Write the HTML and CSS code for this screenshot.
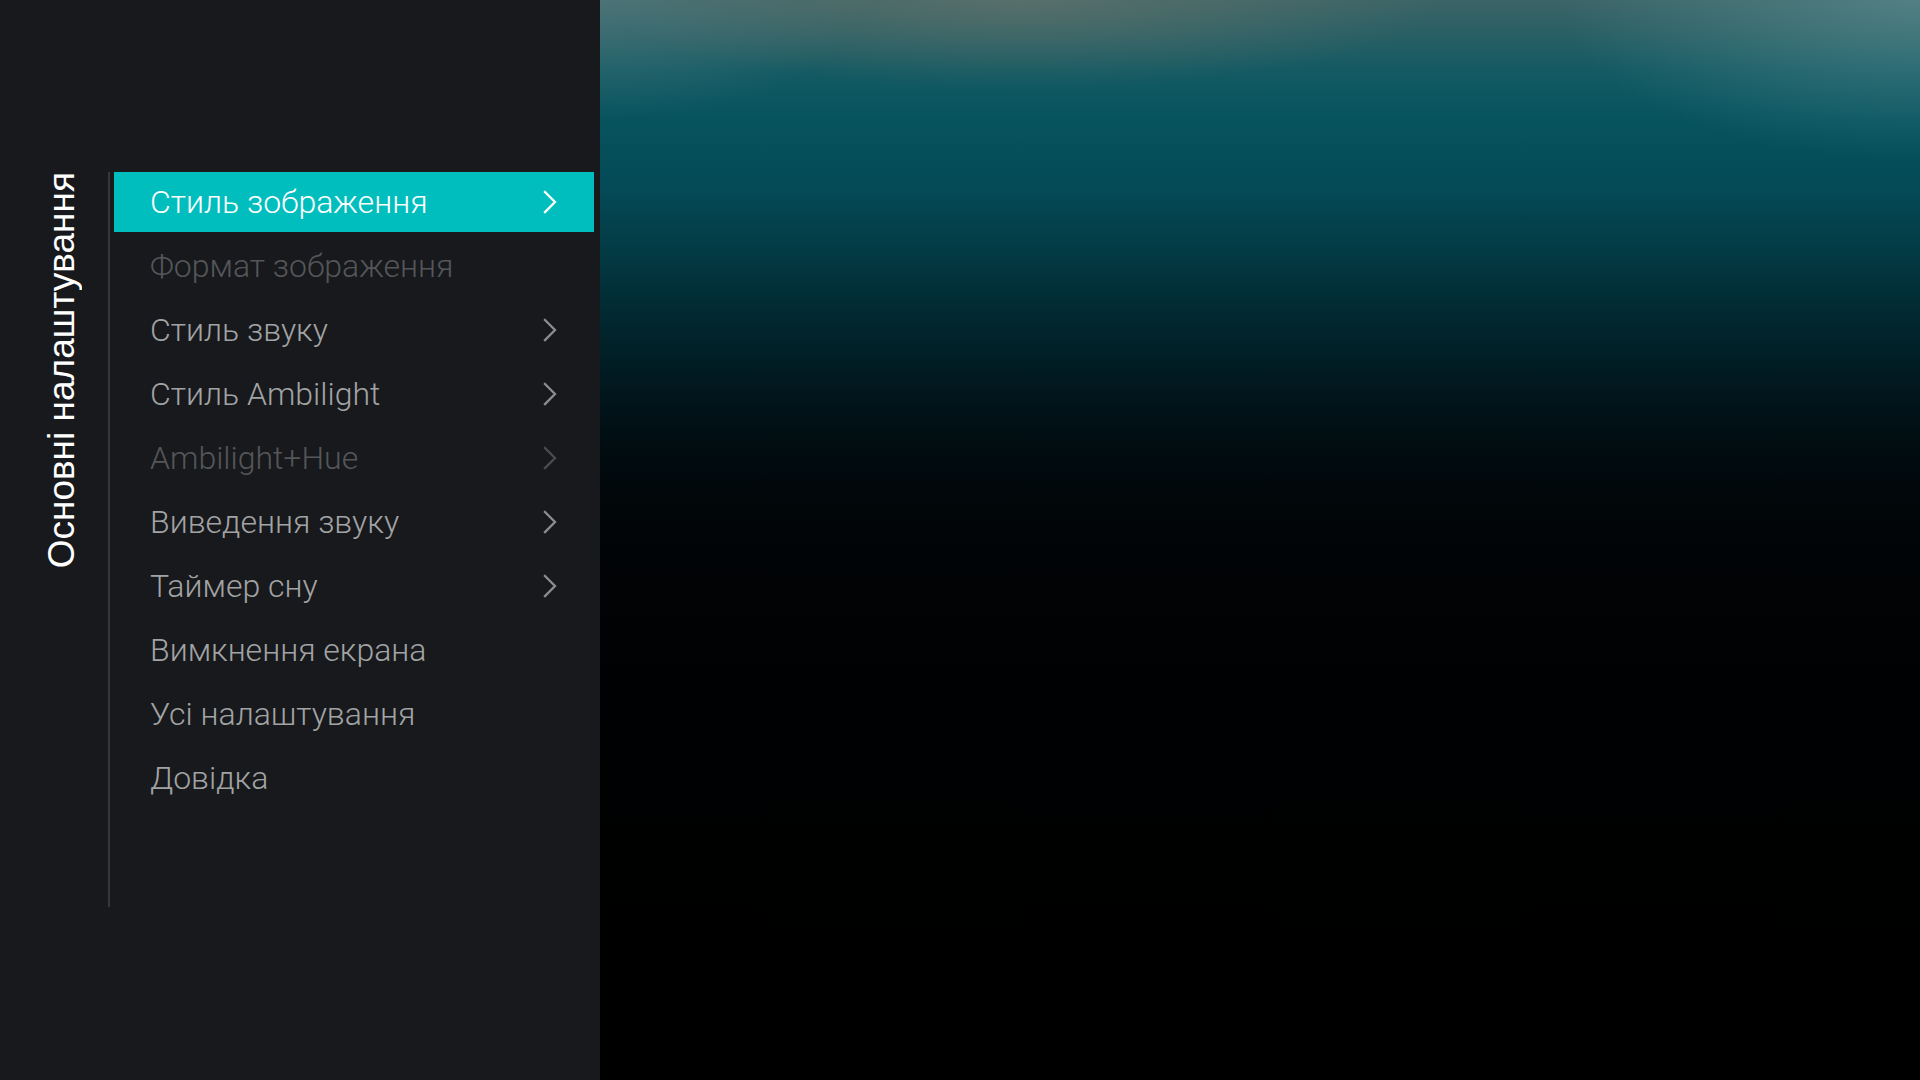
FILE: index.html
```html
<!DOCTYPE html>
<html lang="uk">
<head>
<meta charset="utf-8">
<title>Основні налаштування</title>
<link rel="stylesheet" href="styles.css">
</head>
<body>
<div class="screen">
  <aside class="panel">
    <div class="title-col">
      <h1 class="title">Основні налаштування</h1>
    </div>
    <ul class="menu">
      <li class="item selected"><span class="label">Стиль зображення</span><svg class="chev" viewBox="0 0 14 24"><path d="M2 2 L12 12 L2 22"/></svg></li>
      <li class="item disabled"><span class="label">Формат зображення</span></li>
      <li class="item"><span class="label">Стиль звуку</span><svg class="chev" viewBox="0 0 14 24"><path d="M2 2 L12 12 L2 22"/></svg></li>
      <li class="item"><span class="label">Стиль Ambilight</span><svg class="chev" viewBox="0 0 14 24"><path d="M2 2 L12 12 L2 22"/></svg></li>
      <li class="item disabled"><span class="label">Ambilight+Hue</span><svg class="chev" viewBox="0 0 14 24"><path d="M2 2 L12 12 L2 22"/></svg></li>
      <li class="item"><span class="label">Виведення звуку</span><svg class="chev" viewBox="0 0 14 24"><path d="M2 2 L12 12 L2 22"/></svg></li>
      <li class="item"><span class="label">Таймер сну</span><svg class="chev" viewBox="0 0 14 24"><path d="M2 2 L12 12 L2 22"/></svg></li>
      <li class="item"><span class="label">Вимкнення екрана</span></li>
      <li class="item"><span class="label">Усі налаштування</span></li>
      <li class="item"><span class="label">Довідка</span></li>
    </ul>
  </aside>
  <main class="view"></main>
</div>
</body>
</html>
```

FILE: styles.css
```css
html, body {
  margin: 0;
  padding: 0;
  background: #000;
}
.screen {
  display: flex;
  width: 1920px;
  height: 1080px;
  overflow: hidden;
}
.panel {
  width: 600px;
  height: 1080px;
  background: #17191c;
  display: flex;
  align-items: flex-start;
  padding-top: 172px;
  box-sizing: border-box;
  flex-shrink: 0;
}
.title-col {
  width: 108px;
  display: flex;
  justify-content: flex-start;
  padding-left: 44px;
  box-sizing: border-box;
}
.title {
  margin: 0;
  writing-mode: vertical-rl;
  transform: rotate(180deg);
  font-family: "Liberation Sans", Arial, sans-serif;
  font-weight: normal;
  font-size: 37px;
  line-height: 36px;
  color: #ffffff;
  white-space: nowrap;
}
.menu {
  list-style: none;
  margin: 0;
  padding: 0 0 0 4px;
  width: 480px;
  height: 735px;
  border-left: 2px solid #34373b;
  display: flex;
  flex-direction: column;
  gap: 4px;
}
.item {
  height: 60px;
  display: flex;
  align-items: center;
  justify-content: space-between;
  padding: 0 37px 0 36px;
  font-family: Roboto, "Noto Sans", sans-serif;
  font-weight: 300;
  font-size: 32px;
  color: #a2a3a4;
}
.item .chev {
  width: 14px;
  height: 24px;
  fill: none;
  stroke: #8c8d8e;
  stroke-width: 2.3;
  stroke-linecap: square;
}
.item.selected {
  background: #00bebe;
  color: #ffffff;
}
.item.selected .chev {
  stroke: #ffffff;
}
.item.disabled {
  color: #54565a;
}
.item.disabled .chev {
  stroke: #4a4c4f;
}
.view {
  flex: 1;
  height: 1080px;
  background:
    radial-gradient(ellipse 420px 90px at 420px 0px, rgba(110,120,110,0.55), rgba(110,120,110,0) 100%),
    radial-gradient(ellipse 360px 160px at 1320px 0px, rgba(100,150,155,0.55), rgba(100,150,155,0) 100%),
    radial-gradient(ellipse 260px 120px at 0px 0px, rgba(90,130,135,0.5), rgba(90,130,135,0) 100%),
    linear-gradient(to bottom,
      #3c6466 0px,
      #145a63 70px,
      #06535e 120px,
      #044a56 190px,
      #033b45 250px,
      #022a32 310px,
      #011b22 370px,
      #010f14 430px,
      #010609 500px,
      #010305 580px,
      #000102 700px,
      #000000 1080px);
}
```
